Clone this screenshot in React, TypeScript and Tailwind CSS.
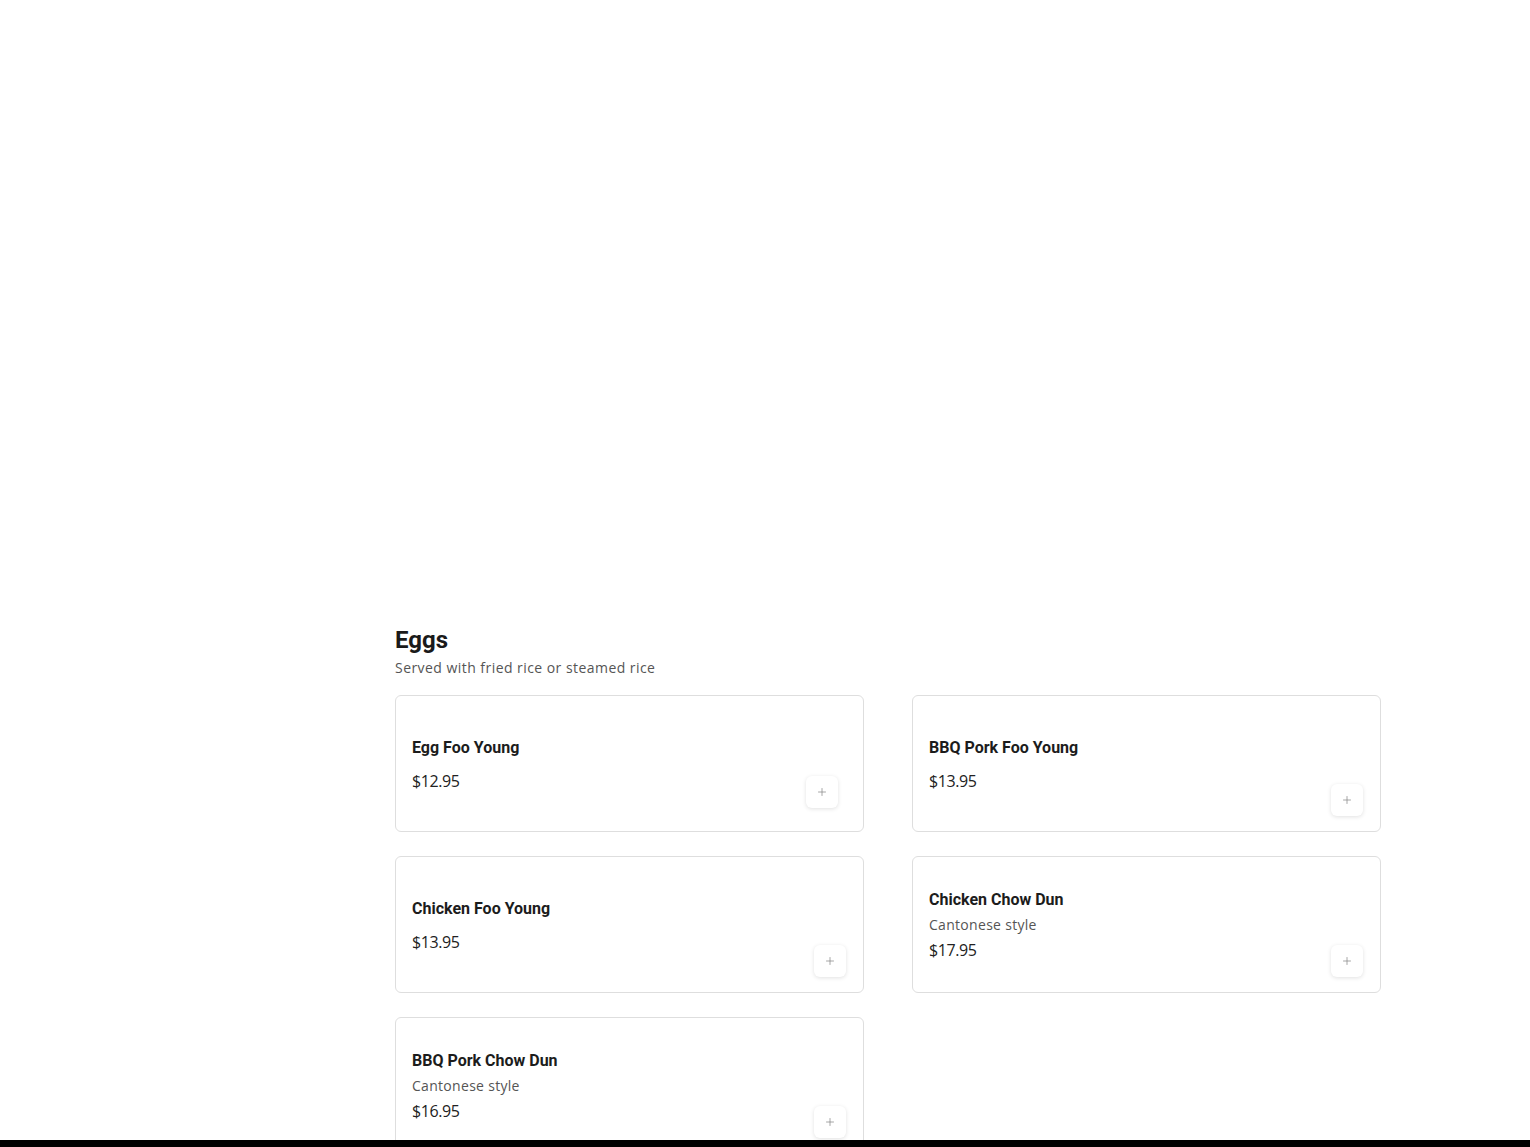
import { Plus } from 'lucide-react'

interface Item {
  id: string
  name: string
  desc?: string
  price: string
}

const items: Item[] = [
  { id: '1', name: 'Egg Foo Young', price: '$12.95' },
  { id: '2', name: 'BBQ Pork Foo Young', price: '$13.95' },
  { id: '3', name: 'Chicken Foo Young', price: '$13.95' },
  { id: '4', name: 'Chicken Chow Dun', desc: 'Cantonese style', price: '$17.95' },
  { id: '5', name: 'BBQ Pork Chow Dun', desc: 'Cantonese style', price: '$16.95' },
]

function ItemCard({ item, first }: { item: Item; first?: boolean }) {
  return (
    <div
      className={`relative h-[137px] rounded-md border border-[#dedede] bg-white px-4 flex flex-col justify-center ${
        item.desc ? 'pt-[1px]' : 'pt-[2px]'
      }`}
    >
      <div className="font-['Roboto',sans-serif] text-base font-bold text-[#1c1c1c] leading-6">{item.name}</div>
      {item.desc && (
        <div className="font-['Open_Sans',sans-serif] text-sm text-[#555] leading-6 mt-[1px] tracking-[0.3px]">
          {item.desc}
        </div>
      )}
      <div
        className={`font-['Open_Sans',sans-serif] text-base text-[#222] leading-6 tracking-[-0.4px] ${
          item.desc ? 'mt-[1px]' : 'mt-[9px]'
        }`}
      >
        {item.price}
      </div>
      <button
        className={
          first
            ? 'absolute right-[25px] bottom-[23px] w-8 h-8 rounded-md bg-white shadow-[0_1px_4px_rgba(0,0,0,0.12)] flex items-center justify-center'
            : 'absolute right-[17px] bottom-[15px] w-8 h-8 rounded-md bg-white shadow-[0_1px_4px_rgba(0,0,0,0.12)] flex items-center justify-center'
        }
      >
        <Plus className="w-3 h-3 text-[#888]" strokeWidth={1.5} />
      </button>
    </div>
  )
}

export default function App() {
  return (
    <div className="min-h-screen bg-white">
      <div className="w-[986px] ml-[395px] pt-[624px]">
        <h2 className="font-['Roboto',sans-serif] text-[24px] font-bold text-[#1a1a1a] leading-8">Eggs</h2>
        <p className="font-['Open_Sans',sans-serif] text-sm text-[#555] leading-5 mt-[2px] tracking-[0.45px]">
          Served with fried rice or steamed rice
        </p>
        <div className="grid grid-cols-2 gap-x-12 gap-y-6 mt-[17px]">
          {items.map((item, i) => (
            <ItemCard key={item.id} item={item} first={i === 0} />
          ))}
        </div>
      </div>
      <div className="fixed bottom-0 left-0 right-0 h-[7px] bg-black" />
    </div>
  )
}
